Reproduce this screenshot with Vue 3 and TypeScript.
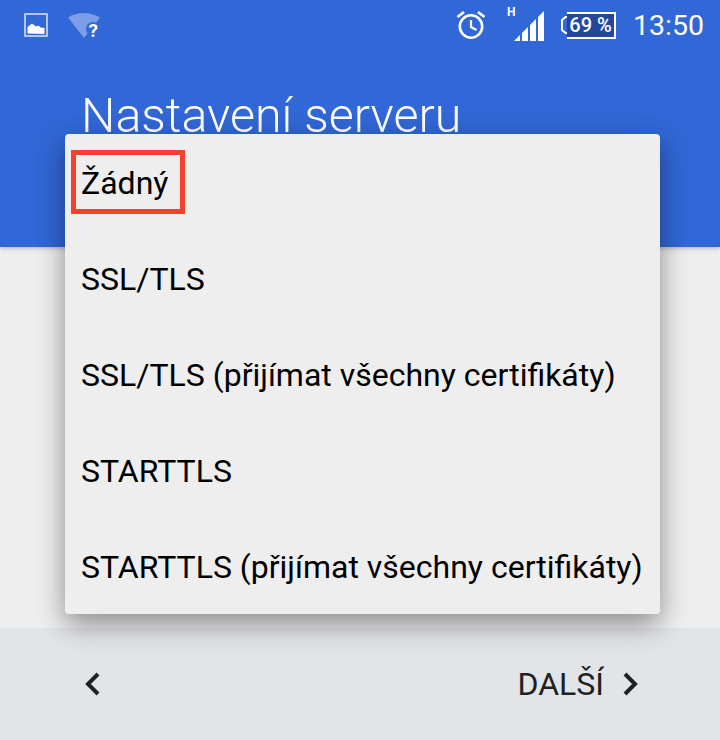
<script setup lang="ts">
const options: string[] = [
  'Žádný',
  'SSL/TLS',
  'SSL/TLS (přijímat všechny certifikáty)',
  'STARTTLS',
  'STARTTLS (přijímat všechny certifikáty)'
]
</script>

<template>
  <div class="screen">
    <header class="header">
      <div class="status">
        <svg class="ic-image" width="24" height="24" viewBox="0 0 24 24">
          <rect x="1" y="1" width="22" height="22" fill="none" stroke="#d5def5" stroke-width="1.6" />
          <path d="M3.500 20.500V14L8 10.500l4 3 2.500-1 2 2 4 .5v6z" fill="#fff" />
        </svg>
        <svg class="ic-wifi" width="34" height="28" viewBox="0 0 34 28">
          <path d="M1 6.500C10 .5 23 .5 33 6.500L17 27z" fill="#7c9de8" />
          <circle cx="26" cy="18" r="7" fill="#3167d6" />
          <text x="21.500" y="26" class="q">?</text>
        </svg>
        <span class="spacer"></span>
        <svg class="ic-alarm" width="30" height="30" viewBox="0 0 30 30">
          <circle cx="15" cy="16.500" r="11.200" fill="none" stroke="#fff" stroke-width="2.600" />
          <path d="M15 10v7l5.500 3" fill="none" stroke="#fff" stroke-width="2.200" />
          <path d="M1.500 7 8 2M28.500 7 22 2" stroke="#fff" stroke-width="2.800" />
        </svg>
        <div class="signal">
          <span class="h">H</span>
          <svg width="30" height="30" viewBox="0 0 30 30">
            <path d="M0 30l6-6v6zM8 30v-8l6-6v14zM16 30V14l6-6v22zM24 30V6l6-6v30z" fill="#fff" />
          </svg>
        </div>
        <svg class="ic-nub" width="6" height="18" viewBox="0 0 6 18">
          <path d="M6 1H4.500L1 4v10l3.500 3H6" fill="none" stroke="#fff" stroke-width="2" />
        </svg>
        <div class="battery">69 %</div>
        <span class="clock">13:50</span>
      </div>
      <h1 class="title">Nastavení serveru</h1>
    </header>
    <main class="body"></main>
    <footer class="footer">
      <svg class="chev" width="18" height="26" viewBox="0 0 18 26">
        <path d="M15 3 5 13l10 10" fill="none" stroke="#212121" stroke-width="4" />
      </svg>
      <div class="next">
        <span>DALŠÍ</span>
        <svg class="chev" width="18" height="26" viewBox="0 0 18 26">
          <path d="M3 3l10 10L3 23" fill="none" stroke="#212121" stroke-width="4" />
        </svg>
      </div>
    </footer>
    <div class="menu">
      <div v-for="(o, i) in options" :key="o" class="item">
        <span :class="{ marked: i === 0 }">{{ o }}</span>
      </div>
    </div>
  </div>
</template>

<style>
html, body { margin: 0; background: #eee; }
</style>

<style scoped>
.screen {
  position: relative;
  width: 720px;
  height: 740px;
  display: flex;
  flex-direction: column;
  overflow: hidden;
  font-family: Roboto, "Liberation Sans", sans-serif;
}
.header {
  height: 247px;
  background: #3167d6;
  box-sizing: border-box;
  box-shadow: 0 2px 4px rgba(0, 0, 0, .2);
  position: relative;
  z-index: 1;
}
.status {
  height: 50px;
  display: flex;
  align-items: center;
  padding: 0 16px 0 24px;
  color: #fff;
}
.ic-image { margin-right: 19px; }
.ic-wifi { overflow: visible; }
.spacer { flex: 1; }
.ic-alarm { margin-right: 28px; }
.q { font: 700 19px Roboto, sans-serif; fill: #fff; }
.signal { position: relative; width: 30px; height: 30px; margin-right: 17px; margin-top: 2px; }
.signal svg { display: block; }
.h {
  position: absolute;
  left: -7px;
  top: -6px;
  font-size: 12px;
  font-weight: 700;
}
.battery {
  width: 49px;
  height: 27px;
  box-sizing: border-box;
  border: 2px solid #fff;
  border-left: 0;
  background: #23479b;
  font-size: 20px;
  font-weight: 500;
  line-height: 23px;
  text-align: center;
  margin-right: 17px;
  white-space: nowrap;
}
.clock { font-size: 28.500px; }
.title {
  margin: 38px 0 0 81px;
  font-size: 48.400px;
  font-weight: 300;
  line-height: 56px;
  color: #fff;
  white-space: nowrap;
}
.body { flex: 1; background: #eee; }
.footer {
  height: 112px;
  background: #e2e5e8;
  display: flex;
  align-items: center;
  justify-content: space-between;
  padding: 0 80px 0 83px;
}
.next {
  display: flex;
  align-items: center;
  gap: 18px;
  font-size: 32px;
  color: #212121;
}
.menu {
  position: absolute;
  z-index: 2;
  left: 65px;
  top: 134px;
  width: 595px;
  background: #eee;
  border-radius: 4px;
  box-shadow: 0 10px 28px rgba(0, 0, 0, .42);
}
.item {
  height: 96px;
  box-sizing: border-box;
  padding-top: 2px;
  display: flex;
  align-items: center;
  padding-left: 16px;
  font-size: 32px;
  color: #000;
  white-space: nowrap;
}
.marked { position: relative; }
.marked::after {
  content: "";
  position: absolute;
  left: -10px;
  top: -14px;
  width: 114px;
  height: 64px;
  box-sizing: border-box;
  border: 5px solid #f6412f;
}
</style>
